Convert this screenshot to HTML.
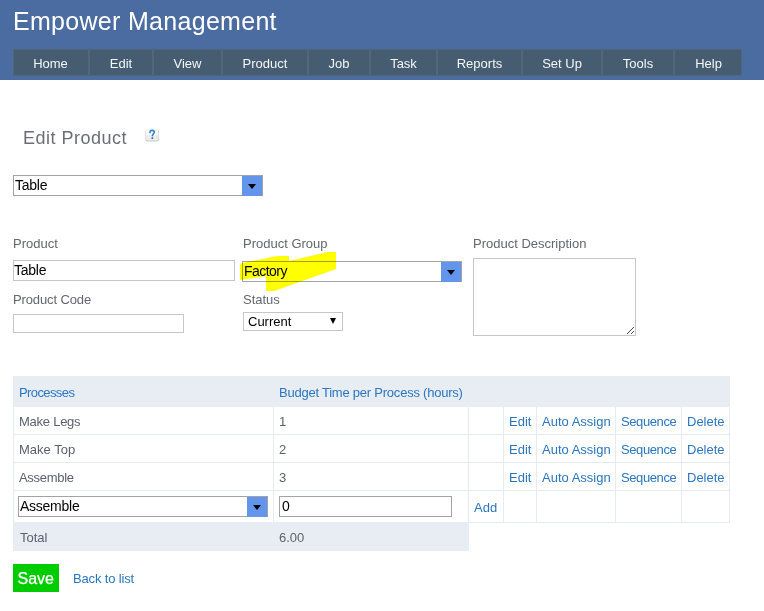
<!DOCTYPE html>
<html><head><meta charset="utf-8">
<style>
html,body{margin:0;padding:0;width:764px;height:611px;overflow:hidden;background:#fff;}
body{position:relative;font-family:"Liberation Sans",sans-serif;}
.a{position:absolute;}
.t{position:absolute;line-height:1;white-space:nowrap;font-family:"Liberation Sans",sans-serif;}
#hdr{left:0;top:0;width:764px;height:80px;background:#4b6ca0;}
#nav{left:13px;top:49px;width:729px;height:27px;background:#465c71;}
.ni{position:absolute;top:0;height:27px;}
.sep{position:absolute;top:1px;width:2px;height:26px;background:#52677d;}
.nt{position:absolute;top:8px;left:0;width:100%;text-align:center;font-size:13px;line-height:1;color:#f4f6f8;}
.lbl{font-size:13px;color:#63676e;}
.box{position:absolute;box-sizing:border-box;border:1px solid #a3a3a3;background:#fff;}
.lb{border-color:#c6c6c6;}
.blue{position:absolute;background:#6495ed;}
.arr{position:absolute;width:0;height:0;border-left:4px solid transparent;border-right:4px solid transparent;border-top:5px solid #000;}
.ft{font-size:14px;color:#000;letter-spacing:-0.25px;}
.ft13{font-size:13px;color:#000;}
.lnk{color:#2a76c0;font-size:13px;}
.cell{color:#5b6170;font-size:13px;}
.hl{position:absolute;left:0;width:764px;height:1px;background:#e6ecf2;}
.vl{position:absolute;width:1px;background:#e6ecf2;}
</style></head><body>
<div id="hdr" class="a"></div>
<div class="t" style="left:13px;top:9px;font-size:25px;color:#fff;letter-spacing:0.3px;">Empower Management</div>
<div id="nav" class="a">
  <div class="ni" style="left:0px;width:75px"><div class="nt">Home</div></div>
  <div class="sep" style="left:75px"></div>
  <div class="ni" style="left:77px;width:62px"><div class="nt">Edit</div></div>
  <div class="sep" style="left:139px"></div>
  <div class="ni" style="left:141px;width:67px"><div class="nt">View</div></div>
  <div class="sep" style="left:208px"></div>
  <div class="ni" style="left:210px;width:84px"><div class="nt">Product</div></div>
  <div class="sep" style="left:294px"></div>
  <div class="ni" style="left:296px;width:60px"><div class="nt">Job</div></div>
  <div class="sep" style="left:356px"></div>
  <div class="ni" style="left:358px;width:65px"><div class="nt">Task</div></div>
  <div class="sep" style="left:423px"></div>
  <div class="ni" style="left:425px;width:83px"><div class="nt">Reports</div></div>
  <div class="sep" style="left:508px"></div>
  <div class="ni" style="left:510px;width:78px"><div class="nt">Set Up</div></div>
  <div class="sep" style="left:588px"></div>
  <div class="ni" style="left:590px;width:70px"><div class="nt">Tools</div></div>
  <div class="sep" style="left:660px"></div>
  <div class="ni" style="left:662px;width:67px"><div class="nt">Help</div></div>
</div>
<div class="a" style="left:13px;top:49px;width:729px;height:27px;box-sizing:border-box;border:1px solid #50647a;"></div>

<div class="t" style="left:23px;top:129px;font-size:18px;color:#6a6e74;letter-spacing:0.5px;">Edit Product</div>
<svg class="a" style="left:144px;top:127px;" width="17" height="17" viewBox="0 0 17 17">
<rect x="1.5" y="2.5" width="13.2" height="12" rx="2" fill="#a8a8a8" opacity="0.6"/>
<rect x="2" y="2" width="12.2" height="11.6" rx="2" fill="#ececec"/><rect x="2.4" y="2.3" width="11.4" height="6" rx="1.8" fill="#fafafa"/>
<path d="M6,5.6 C6,4.2 6.9,3.4 8.1,3.4 C9.3,3.4 10.3,4.1 10.3,5.3 C10.3,6.7 8.5,7 8.4,8.6" fill="none" stroke="#3784cc" stroke-width="1.6" stroke-linecap="round"/>
<circle cx="8.3" cy="11.1" r="0.95" fill="#1e5cb0"/>
</svg>

<!-- top select -->
<div class="box" style="left:13px;top:175px;width:250px;height:21px;"></div>
<div class="blue" style="left:242px;top:176px;width:20px;height:20px;"></div>
<div class="arr" style="left:248px;top:184px;"></div>
<div class="t ft" style="left:15px;top:178px;">Table</div>

<!-- labels -->
<div class="t lbl" style="left:13px;top:237px;">Product</div>
<div class="t lbl" style="left:243px;top:237px;">Product Group</div>
<div class="t lbl" style="left:473px;top:237px;">Product Description</div>
<div class="t lbl" style="left:13px;top:293px;letter-spacing:-0.12px;">Product Code</div>
<div class="t lbl" style="left:243px;top:293px;">Status</div>

<div class="box lb" style="left:13px;top:260px;width:222px;height:21px;"></div>
<div class="t ft" style="left:14px;top:263px;">Table</div>

<div class="box" style="left:242px;top:261px;width:220px;height:21px;"></div>
<div class="blue" style="left:441px;top:262px;width:20px;height:20px;"></div>
<div class="arr" style="left:447px;top:270px;"></div>
<div class="t ft" style="left:244px;top:264px;letter-spacing:-0.55px;">Factory</div>

<div class="box lb" style="left:473px;top:258px;width:163px;height:78px;"></div>
<div class="a" style="left:627px;top:333px;width:1px;height:1px;background:#4a4a4a;"></div><div class="a" style="left:628px;top:332px;width:1px;height:1px;background:#4a4a4a;"></div><div class="a" style="left:629px;top:331px;width:1px;height:1px;background:#4a4a4a;"></div><div class="a" style="left:630px;top:330px;width:1px;height:1px;background:#4a4a4a;"></div><div class="a" style="left:631px;top:329px;width:1px;height:1px;background:#4a4a4a;"></div><div class="a" style="left:632px;top:328px;width:1px;height:1px;background:#4a4a4a;"></div><div class="a" style="left:633px;top:327px;width:1px;height:1px;background:#4a4a4a;"></div><div class="a" style="left:631px;top:333px;width:1px;height:1px;background:#4a4a4a;"></div><div class="a" style="left:632px;top:332px;width:1px;height:1px;background:#4a4a4a;"></div><div class="a" style="left:633px;top:331px;width:1px;height:1px;background:#4a4a4a;"></div>

<div class="box lb" style="left:13px;top:314px;width:171px;height:19px;"></div>

<div class="box lb" style="left:243px;top:312px;width:100px;height:19px;"></div>
<div class="t ft13" style="left:248px;top:315px;">Current</div>
<div class="arr" style="left:330px;top:318px;border-left-width:3.5px;border-right-width:3.5px;border-top-width:6px;"></div>

<!-- table -->
<div class="a" style="left:13px;top:376px;width:717px;height:31px;background:#e8edf4;"></div>
<div class="a" style="left:13px;top:522px;width:456px;height:29px;background:#e8edf4;"></div>

<!-- table borders -->
<div class="a" style="left:13px;top:434px;width:717px;height:1px;background:#e6ebf2;"></div>
<div class="a" style="left:13px;top:462px;width:717px;height:1px;background:#e6ebf2;"></div>
<div class="a" style="left:13px;top:490px;width:717px;height:1px;background:#e6ebf2;"></div>
<div class="a" style="left:469px;top:522px;width:261px;height:1px;background:#e6ebf2;"></div>
<div class="a" style="left:13px;top:407px;width:1px;height:115px;background:#e6ebf2;"></div>
<div class="a" style="left:273px;top:407px;width:1px;height:115px;background:#e6ebf2;"></div>
<div class="a" style="left:468px;top:407px;width:1px;height:115px;background:#e6ebf2;"></div>
<div class="a" style="left:503px;top:407px;width:1px;height:115px;background:#e6ebf2;"></div>
<div class="a" style="left:536px;top:407px;width:1px;height:115px;background:#e6ebf2;"></div>
<div class="a" style="left:615px;top:407px;width:1px;height:115px;background:#e6ebf2;"></div>
<div class="a" style="left:681px;top:407px;width:1px;height:115px;background:#e6ebf2;"></div>
<div class="a" style="left:729px;top:407px;width:1px;height:116px;background:#e6ebf2;"></div>
<div class="t lnk" style="left:19px;top:386px;letter-spacing:-0.6px;">Processes</div>
<div class="t lnk" style="left:279px;top:386px;letter-spacing:-0.23px;">Budget Time per Process (hours)</div>

<div class="t cell" style="left:19px;top:415px;letter-spacing:-0.25px;">Make Legs</div>
<div class="t cell" style="left:279px;top:415px;">1</div>
<div class="t cell" style="left:19px;top:443px;">Make Top</div>
<div class="t cell" style="left:279px;top:443px;">2</div>
<div class="t cell" style="left:19px;top:471px;letter-spacing:-0.3px;">Assemble</div>
<div class="t cell" style="left:279px;top:471px;">3</div>

<div class="t lnk" style="left:509px;top:415px;">Edit</div>
<div class="t lnk" style="left:542px;top:415px;">Auto Assign</div>
<div class="t lnk" style="left:621px;top:415px;letter-spacing:-0.4px;">Sequence</div>
<div class="t lnk" style="left:687px;top:415px;">Delete</div>
<div class="t lnk" style="left:509px;top:443px;">Edit</div>
<div class="t lnk" style="left:542px;top:443px;">Auto Assign</div>
<div class="t lnk" style="left:621px;top:443px;letter-spacing:-0.4px;">Sequence</div>
<div class="t lnk" style="left:687px;top:443px;">Delete</div>
<div class="t lnk" style="left:509px;top:471px;">Edit</div>
<div class="t lnk" style="left:542px;top:471px;">Auto Assign</div>
<div class="t lnk" style="left:621px;top:471px;letter-spacing:-0.4px;">Sequence</div>
<div class="t lnk" style="left:687px;top:471px;">Delete</div>

<div class="box" style="left:18px;top:496px;width:250px;height:21px;"></div>
<div class="blue" style="left:247px;top:497px;width:20px;height:20px;"></div>
<div class="arr" style="left:253px;top:505px;"></div>
<div class="t ft" style="left:20px;top:499px;">Assemble</div>
<div class="box" style="left:279px;top:496px;width:173px;height:21px;"></div>
<div class="t ft" style="left:282px;top:499px;">0</div>
<div class="t lnk" style="left:474px;top:501px;">Add</div>

<div class="t cell" style="left:20px;top:531px;">Total</div>
<div class="t cell" style="left:279px;top:531px;">6.00</div>

<div class="a" style="left:13px;top:564px;width:46px;height:28px;background:#00cc00;"></div>
<div class="t" style="left:17.5px;top:570.5px;font-size:16px;color:#fff;-webkit-text-stroke:0.25px #fff;">Save</div>
<div class="t lnk" style="left:73px;top:572px;letter-spacing:-0.15px;">Back to list</div>

<svg class="a" style="left:0;top:0;mix-blend-mode:multiply;" width="764" height="611"><polygon fill="#ffff00" points="240,263.7 277,256 289,256 289,261 328,252 336,252 336,269 274,291 266,291 266,276.3 240,280"/></svg>
</body></html>
